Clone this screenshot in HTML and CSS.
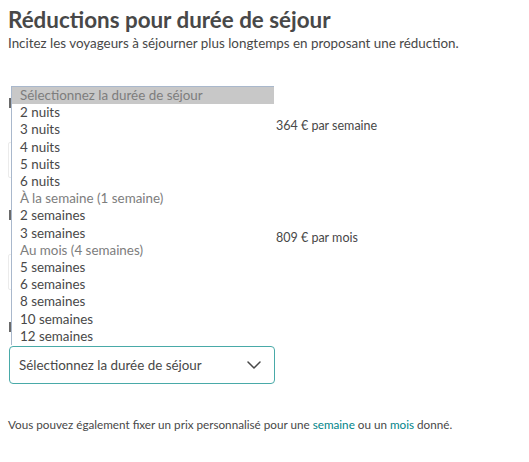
FILE: index.html
```html
<!DOCTYPE html>
<html lang="fr">
<head>
<meta charset="utf-8">
<title>Réductions pour durée de séjour</title>
<link rel="stylesheet" href="styles.css">
</head>
<body>
<div class="page">
  <h1 class="title">Réductions pour durée de séjour</h1>
  <p class="subtitle">Incitez les voyageurs à séjourner plus longtemps en proposant une réduction.</p>

  <div class="form">
    <div class="discount discount-week">
      <div class="label"></div>
      <div class="price-row"><span class="price">364 € par semaine</span></div>
      <div class="field"></div>
    </div>
    <div class="discount discount-month">
      <div class="label"></div>
      <div class="price-row"><span class="price">809 € par mois</span></div>
      <div class="field"></div>
    </div>
    <div class="discount discount-custom">
      <div class="label"></div>
      <div class="select">
        <span class="select-text">Sélectionnez la durée de séjour</span>
        <svg class="chevron" width="14" height="8" viewBox="0 0 14 8"><path d="M1 1 L7 7 L13 1" fill="none" stroke="#484848" stroke-width="1.5" stroke-linecap="round" stroke-linejoin="round"/></svg>
      </div>

      <ul class="options">
        <li class="opt opt-head">Sélectionnez la durée de séjour</li>
        <li class="opt">2 nuits</li>
        <li class="opt">3 nuits</li>
        <li class="opt">4 nuits</li>
        <li class="opt">5 nuits</li>
        <li class="opt">6 nuits</li>
        <li class="opt opt-dim">À la semaine (1 semaine)</li>
        <li class="opt">2 semaines</li>
        <li class="opt">3 semaines</li>
        <li class="opt opt-dim">Au mois (4 semaines)</li>
        <li class="opt">5 semaines</li>
        <li class="opt">6 semaines</li>
        <li class="opt">8 semaines</li>
        <li class="opt">10 semaines</li>
        <li class="opt">12 semaines</li>
      </ul>
    </div>
  </div>

  <p class="note">Vous pouvez également fixer un prix personnalisé pour une <a class="link" href="#">semaine</a> ou un <a class="link" href="#">mois</a> donné.</p>
</div>
</body>
</html>
```

FILE: styles.css
```css
html, body {
  margin: 0;
  padding: 0;
  background: #ffffff;
}

body {
  font-family: Lato, "Liberation Sans", sans-serif;
  color: #484848;
}

.page {
  position: relative;
  padding: 6px 8px 0 8px;
}

.title {
  margin: 0;
  font-size: 22.4px;
  line-height: 28px;
  font-weight: 700;
  color: #484848;
}

.subtitle {
  margin: 0;
  font-size: 13.4px;
  line-height: 18px;
  color: #484848;
}

.form {
  position: relative;
  margin-top: 42px;
  display: flex;
  flex-direction: column;
}

.discount {
  display: flex;
  flex-direction: column;
}

.discount-week,
.discount-month {
  margin-bottom: 28px;
}

.label {
  height: 18px;
  position: relative;
}

.label::before {
  content: "";
  position: absolute;
  left: 1px;
  top: 4px;
  width: 2px;
  height: 10px;
  background: #6a6a6a;
}

.price-row {
  display: flex;
  justify-content: flex-start;
  padding-left: 268px;
  margin-top: 6px;
  margin-bottom: 2px;
  font-size: 12.5px;
  line-height: 16px;
}

.price {
  color: #484848;
}

.field {
  margin-top: 6px;
  width: 265px;
  height: 36px;
  border: 1px solid #ebebeb;
  border-radius: 2px;
  box-sizing: border-box;
}

.select {
  margin-top: 10px;
  margin-left: 1px;
  width: 266px;
  height: 38px;
  box-sizing: border-box;
  border: 1px solid #49aaa8;
  border-radius: 4px;
  display: flex;
  align-items: center;
  justify-content: space-between;
  padding: 0 13px 0 9px;
  font-size: 13.4px;
}

.chevron {
  display: block;
}

.options {
  position: absolute;
  left: 3px;
  top: -8px;
  width: 263px;
  margin: 0;
  padding: 0;
  list-style: none;
  background: #ffffff;
  border-top: 1px solid #a9b8cc;
  border-left: 1px solid #a9b8cc;
  box-sizing: border-box;
  font-size: 13.4px;
  line-height: 17.2px;
}

.opt {
  padding-left: 8px;
  color: #484848;
  white-space: nowrap;
}

.opt-head {
  background: #c8c8c8;
  color: #7d7d7d;
}

.opt-dim {
  color: #7d7d7d;
}

.note {
  margin: 32px 0 0 0;
  font-size: 11.7px;
  line-height: 16px;
  color: #484848;
}

.link {
  color: #008489;
  text-decoration: none;
}
```
